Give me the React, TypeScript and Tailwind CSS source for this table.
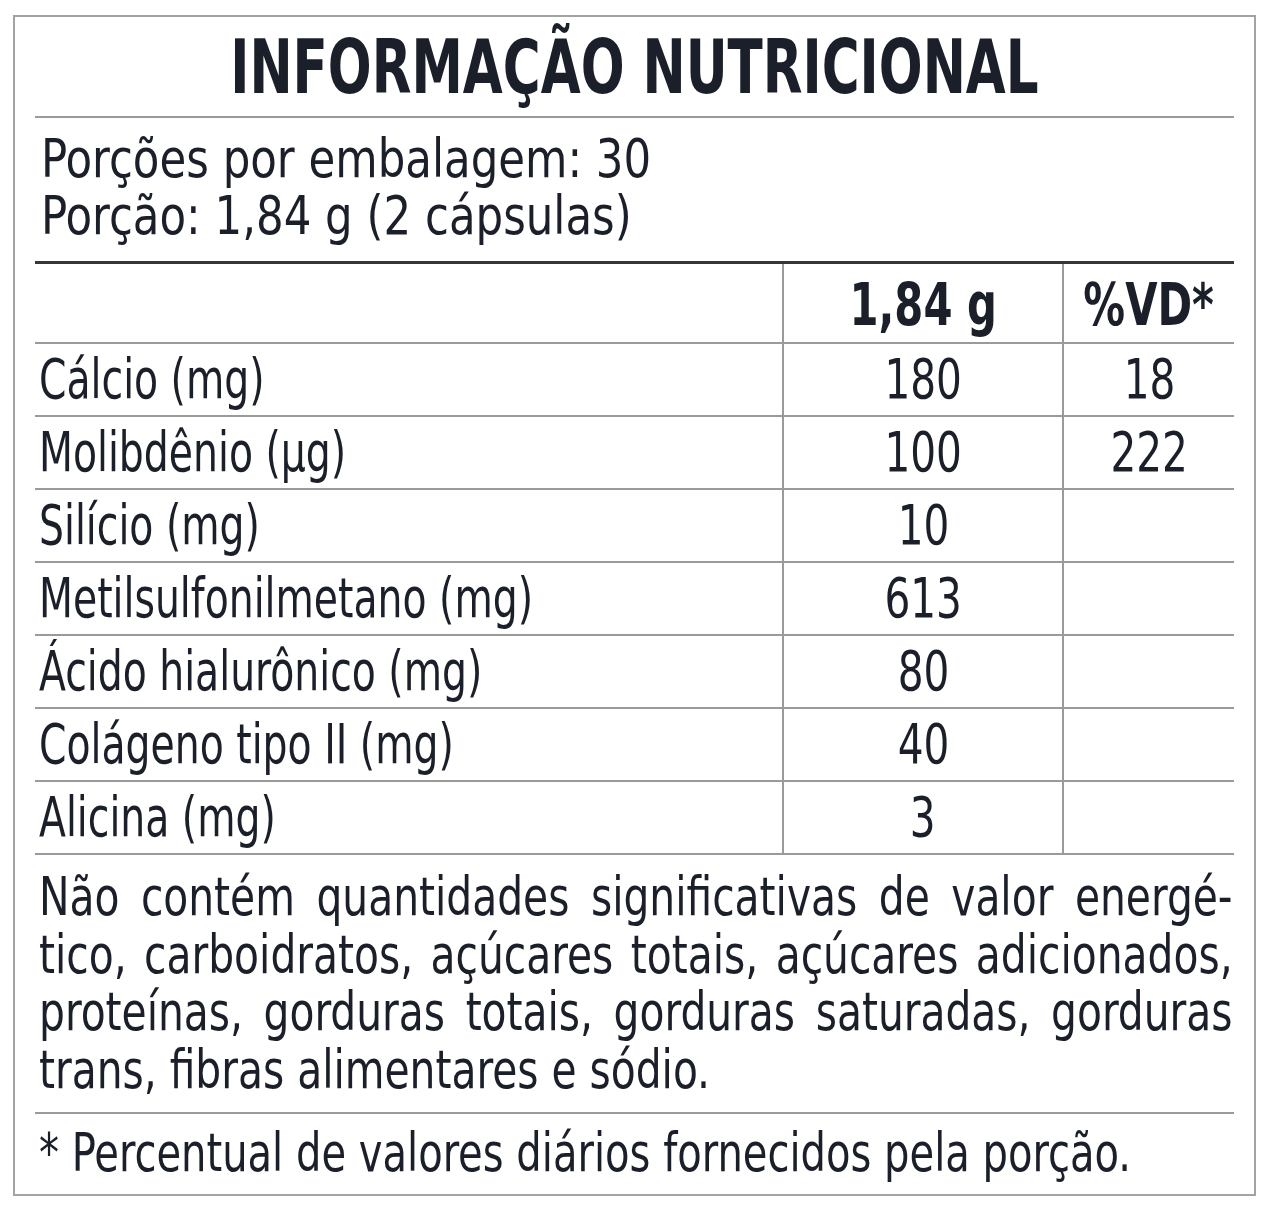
const rows = [
  { name: 'Cálcio (mg)', qty: '180', vd: '18' },
  { name: 'Molibdênio (µg)', qty: '100', vd: '222' },
  { name: 'Silício (mg)', qty: '10', vd: '' },
  { name: 'Metilsulfonilmetano (mg)', qty: '613', vd: '' },
  { name: 'Ácido hialurônico (mg)', qty: '80', vd: '' },
  { name: 'Colágeno tipo II (mg)', qty: '40', vd: '' },
  { name: 'Alicina (mg)', qty: '3', vd: '' },
];

const paragraph = [
  'Não contém quantidades significativas de valor energé-',
  'tico, carboidratos, açúcares totais, açúcares adicionados,',
  'proteínas, gorduras totais, gorduras saturadas, gorduras',
];

export default function App() {
  return (
    <div
      className="w-[1268px] h-[1210px] overflow-hidden bg-white pt-[15px] pl-[13px] text-[#1b1f29]"
      style={{ fontFamily: '"DejaVu Sans Condensed", "Liberation Sans", sans-serif' }}
    >
      <div className="w-[1243px] h-[1181px] border-2 border-[#a3a3a3] px-[20px]">
        {/* Title */}
        <div className="h-[101px] flex items-center justify-center border-b-2 border-[#9a9a9a]">
          <h1 className="inline-block whitespace-nowrap text-[75px] font-bold leading-none pt-[2px] scale-x-[0.765] origin-center">
            INFORMAÇÃO NUTRICIONAL
          </h1>
        </div>

        {/* Porções */}
        <div className="h-[146px] border-b-[3px] border-[#3b3631] pl-[6px] pt-[12px] text-[53px] leading-[57px]">
          <p className="whitespace-nowrap origin-left scale-x-[0.912]">Porções por embalagem: 30</p>
          <p className="whitespace-nowrap origin-left scale-x-[0.912]">Porção: 1,84 g (2 cápsulas)</p>
        </div>

        {/* Table */}
        <div>
          <div className="grid grid-cols-[749px_280px_1fr] h-[80px] border-b-2 border-[#9a9a9a]">
            <div className="border-r-2 border-[#9a9a9a]" />
            <div className="border-r-2 border-[#9a9a9a] flex items-center justify-center pt-[4px]">
              <span className="inline-block whitespace-nowrap text-[58px] font-bold leading-none scale-x-[0.8]">1,84 g</span>
            </div>
            <div className="flex items-center justify-center pt-[4px]">
              <span className="inline-block whitespace-nowrap text-[58px] font-bold leading-none scale-x-[0.8]">%VD*</span>
            </div>
          </div>
          {rows.map((r) => (
            <div
              key={r.name}
              className="grid grid-cols-[749px_280px_1fr] h-[73px] border-b-2 border-[#9a9a9a] text-[55px] leading-none"
            >
              <div className="border-r-2 border-[#9a9a9a] flex items-center pl-[4px]">
                <span className="inline-block whitespace-nowrap origin-left scale-x-[0.795]">{r.name}</span>
              </div>
              <div className="border-r-2 border-[#9a9a9a] flex items-center justify-center">
                <span className="inline-block scale-x-[0.82]">{r.qty}</span>
              </div>
              <div className="flex items-center justify-center">
                <span className="inline-block scale-x-[0.82]">{r.vd}</span>
              </div>
            </div>
          ))}
        </div>

        {/* Paragraph */}
        <div className="h-[259px] border-b-2 border-[#9a9a9a] pl-[4px] pt-[13px] text-[53px] leading-[57.5px]">
          {paragraph.map((line) => (
            <p
              key={line}
              className="w-[1396px] whitespace-nowrap origin-left scale-x-[0.855] text-justify [text-align-last:justify]"
            >
              {line}
            </p>
          ))}
          <p className="whitespace-nowrap origin-left scale-x-[0.855]">trans, fibras alimentares e sódio.</p>
        </div>

        {/* Footnote */}
        <div className="pl-[4px] pt-[10px] text-[53px] leading-[57px]">
          <p className="whitespace-nowrap origin-left scale-x-[0.84]">
            * Percentual de valores diários fornecidos pela porção.
          </p>
        </div>
      </div>
    </div>
  );
}
